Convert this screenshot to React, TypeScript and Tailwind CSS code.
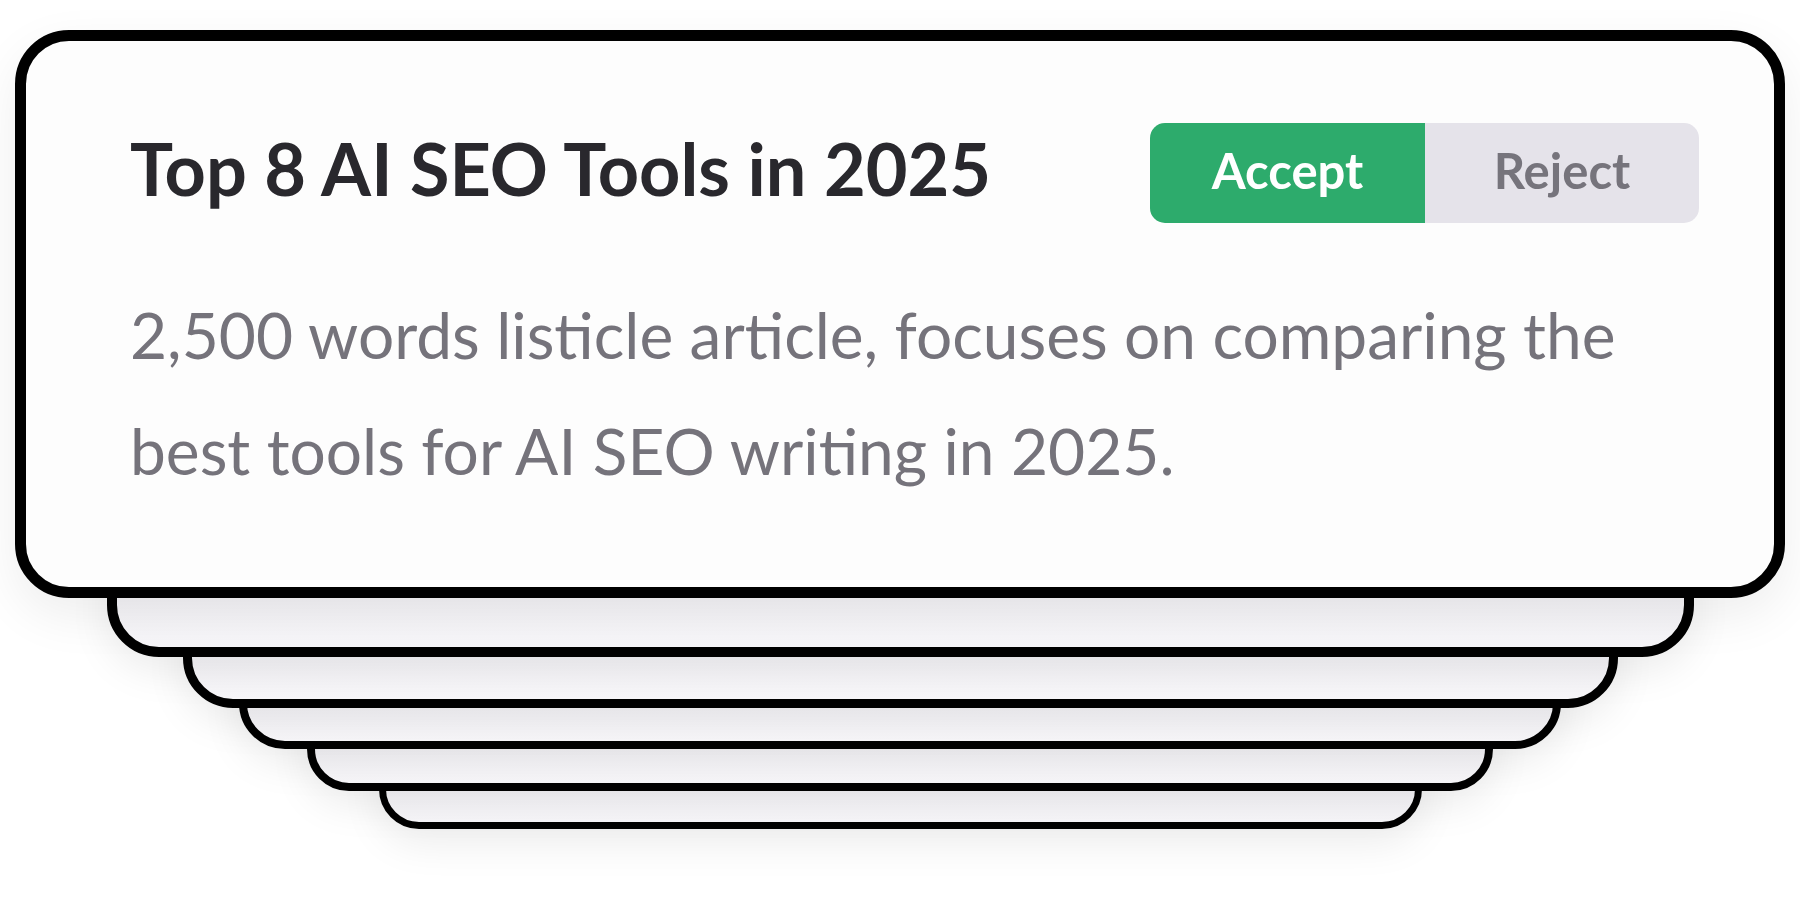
const STACK = [
  { w: "w-[1587px]", mt: "-mt-[61px]", border: "border-[10px]", radius: "rounded-[52px]", z: "z-[5]" },
  { w: "w-[1435px]", mt: "-mt-[69px]", border: "border-[9px]", radius: "rounded-[50px]", z: "z-[4]" },
  { w: "w-[1322px]", mt: "-mt-[79px]", border: "border-[8px]", radius: "rounded-[46px]", z: "z-[3]" },
  { w: "w-[1186px]", mt: "-mt-[78px]", border: "border-[8px]", radius: "rounded-[42px]", z: "z-[2]" },
  { w: "w-[1043px]", mt: "-mt-[82px]", border: "border-[7px]", radius: "rounded-[40px]", z: "z-[1]" },
];

function ArticleCard() {
  return (
    <div className="relative z-[6] h-[568px] w-[1770px] rounded-[54px] border-[11px] border-black bg-[#fdfdfd] pl-[104px] pr-[75px] pt-[82px] shadow-[0_18px_50px_rgba(0,0,0,0.07)]">
      <div className="flex items-start justify-between">
        <h1 className="mt-[2px] text-[72px] font-bold leading-[86px] text-[#29282d]">
          Top 8 AI SEO Tools in 2025
        </h1>
        <div className="flex h-[100px] overflow-hidden rounded-[15px]">
          <button
            type="button"
            className="flex w-[275px] items-center justify-center bg-[#2dab6c] pb-[4px] text-[49px] font-bold text-white"
          >
            Accept
          </button>
          <button
            type="button"
            className="flex w-[274px] items-center justify-center bg-[#e5e3ea] pb-[4px] text-[49px] font-bold text-[#76747c]"
          >
            Reject
          </button>
        </div>
      </div>
      <p className="mt-[54px] text-[64px] leading-[116px] text-[#75737b]">
        2,500 words listicle article, focuses on comparing the best tools for AI SEO writing in 2025.
      </p>
    </div>
  );
}

export default function App() {
  return (
    <div className="flex h-[912px] w-[1800px] flex-col items-center overflow-hidden bg-white pt-[30px] font-['Lato',sans-serif]">
      <ArticleCard />
      {STACK.map((card, i) => (
        <div
          key={i}
          className={`relative h-[120px] ${card.w} ${card.mt} ${card.border} ${card.radius} ${card.z} border-black bg-gradient-to-b from-[#efeef2] to-[#f8f7fa] shadow-[0_14px_40px_rgba(0,0,0,0.08)]`}
        />
      ))}
    </div>
  );
}
